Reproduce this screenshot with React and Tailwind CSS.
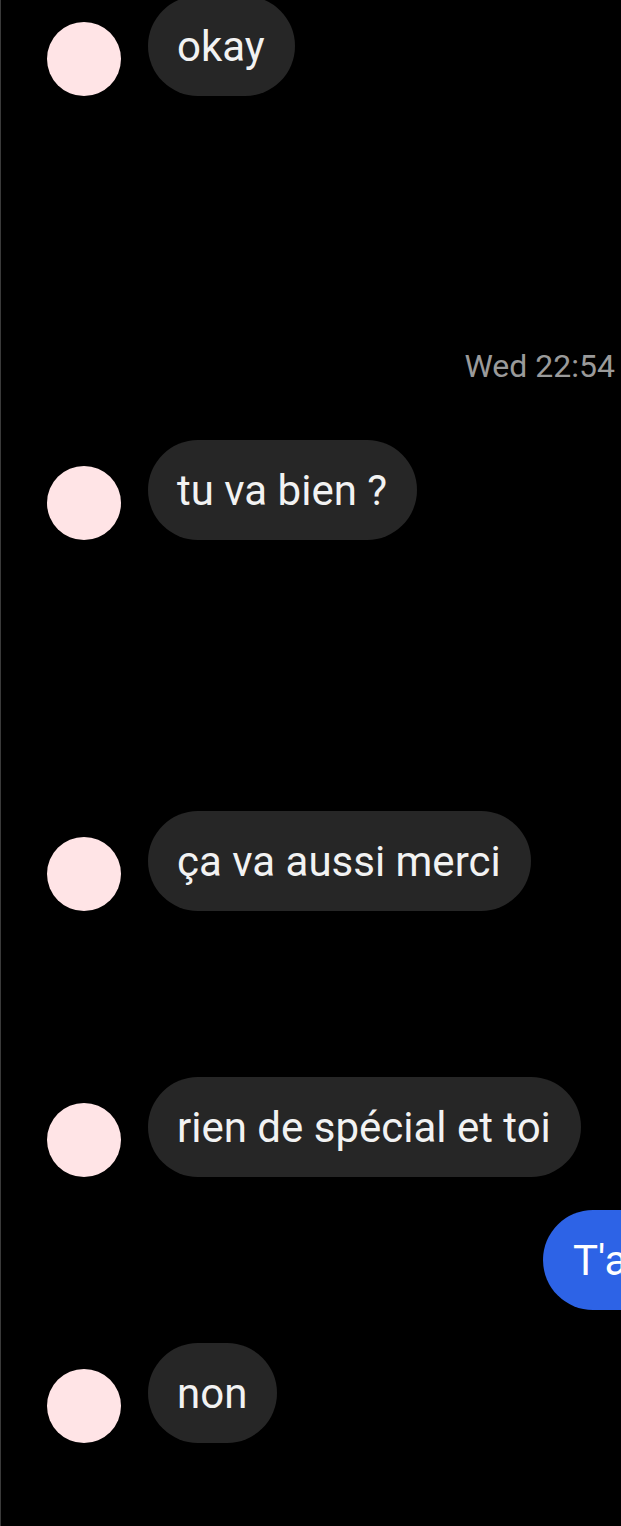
import React from 'react';

const messages = [
  { id: 1, text: 'okay', mt: 'mt-[-4px]' },
  { id: 2, text: 'tu va bien ?', mt: 'mt-[54px]' },
  { id: 3, text: 'ça va aussi merci', mt: 'mt-[271px]' },
  { id: 4, text: 'rien de spécial et toi', mt: 'mt-[166px]' },
];

function Incoming({ text, mt }) {
  return (
    <div className={`flex items-end pl-[46px] ${mt}`}>
      <div className="w-[74px] h-[74px] shrink-0 rounded-full bg-[#ffe4e6]" />
      <div className="ml-[27px] h-[100px] flex items-center rounded-full bg-[#262626] pl-[29px] pr-[30px] text-[42px] text-[#f2f2f2] whitespace-nowrap">
        {text}
      </div>
    </div>
  );
}

export default function App() {
  return (
    <div
      className="w-[621px] h-[1526px] bg-black overflow-hidden border-l border-[#3a3a3a] flex flex-col"
      style={{ fontFamily: 'Roboto, "Noto Sans", sans-serif' }}
    >
      <Incoming {...messages[0]} />

      <div className="mt-[250px] h-[40px] leading-[40px] text-right pr-[6px] text-[32px] text-[#9a9a9a]">
        Wed 22:54
      </div>

      {messages.slice(1).map(m => (
        <Incoming key={m.id} {...m} />
      ))}

      <div className="mt-[33px] flex pl-[542px]">
        <div className="h-[100px] shrink-0 flex items-center rounded-full bg-[#2d63e6] pl-[30px] pr-[80px] text-[42px] text-white whitespace-nowrap">
          T'a
        </div>
      </div>

      <Incoming text="non" mt="mt-[33px]" />
    </div>
  );
}
